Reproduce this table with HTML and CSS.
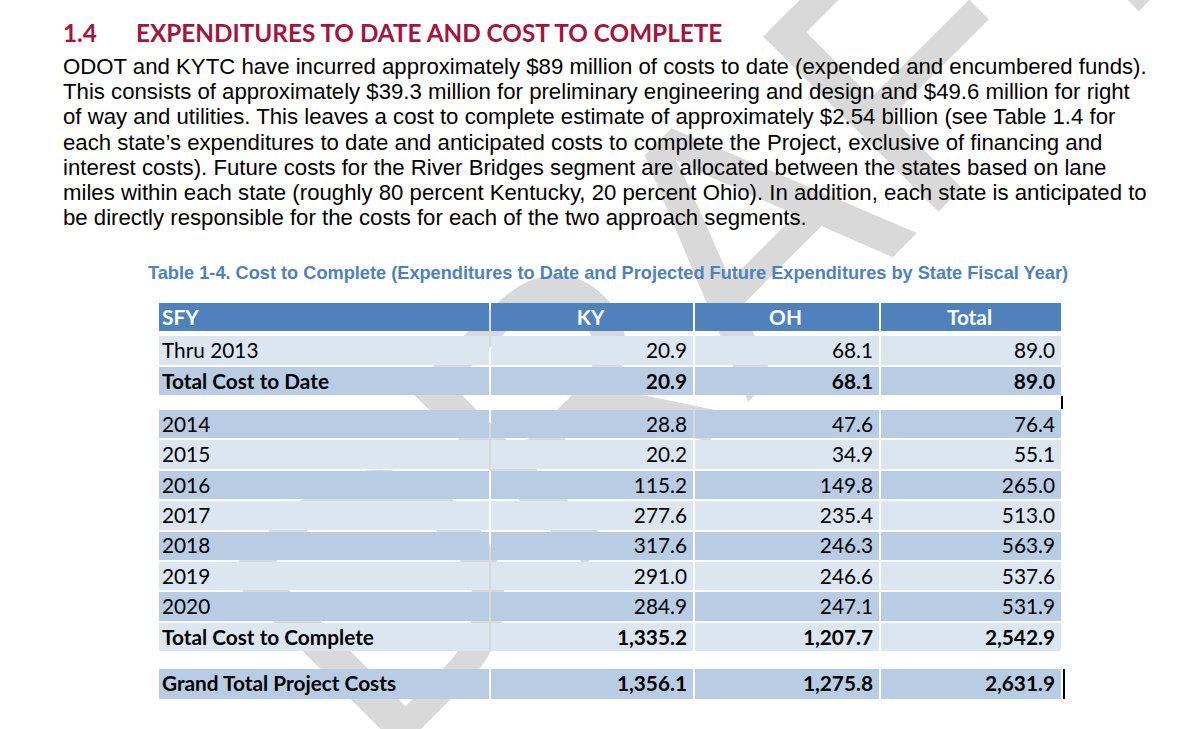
FILE: index.html
```html
<!DOCTYPE html>
<html>
<head>
<meta charset="utf-8">
<link rel="stylesheet" href="styles.css">
</head>
<body>
<svg class="watermark" width="1200" height="729" viewBox="0 0 1200 729" aria-hidden="true"><text x="380" y="770" transform="rotate(-45 380 770)" class="wm-text">DRAFT</text></svg>
<div class="page">
<h1 class="heading"><span class="num">1.4</span><span>EXPENDITURES TO DATE AND COST TO COMPLETE</span></h1>
<p class="body-text">ODOT and KYTC have incurred approximately $89 million of costs to date (expended and encumbered funds).<br>This consists of approximately $39.3 million for preliminary engineering and design and $49.6 million for right<br>of way and utilities. This leaves a cost to complete estimate of approximately $2.54 billion (see Table 1.4 for<br>each state’s expenditures to date and anticipated costs to complete the Project, exclusive of financing and<br>interest costs). Future costs for the River Bridges segment are allocated between the states based on lane<br>miles within each state (roughly 80 percent Kentucky, 20 percent Ohio). In addition, each state is anticipated to<br>be directly responsible for the costs for each of the two approach segments.</p>
<p class="caption">Table 1-4. Cost to Complete (Expenditures to Date and Projected Future Expenditures by State Fiscal Year)</p>
<div class="table">
  <div class="row head"><div class="c first">SFY</div><div class="c">KY</div><div class="c">OH</div><div class="c">Total</div></div>
  <div class="row light top"><div class="c first">Thru 2013</div><div class="c">20.9</div><div class="c">68.1</div><div class="c">89.0</div></div>
  <div class="row mid bold"><div class="c first">Total Cost to Date</div><div class="c">20.9</div><div class="c">68.1</div><div class="c">89.0</div></div>
  <div class="spacer s1"><span class="caret c1"></span></div>
  <div class="row mid"><div class="c first">2014</div><div class="c">28.8</div><div class="c">47.6</div><div class="c">76.4</div></div>
  <div class="row light"><div class="c first">2015</div><div class="c">20.2</div><div class="c">34.9</div><div class="c">55.1</div></div>
  <div class="row mid"><div class="c first">2016</div><div class="c">115.2</div><div class="c">149.8</div><div class="c">265.0</div></div>
  <div class="row light"><div class="c first">2017</div><div class="c">277.6</div><div class="c">235.4</div><div class="c">513.0</div></div>
  <div class="row mid"><div class="c first">2018</div><div class="c">317.6</div><div class="c">246.3</div><div class="c">563.9</div></div>
  <div class="row light"><div class="c first">2019</div><div class="c">291.0</div><div class="c">246.6</div><div class="c">537.6</div></div>
  <div class="row mid"><div class="c first">2020</div><div class="c">284.9</div><div class="c">247.1</div><div class="c">531.9</div></div>
  <div class="row light bold"><div class="c first">Total Cost to Complete</div><div class="c">1,335.2</div><div class="c">1,207.7</div><div class="c">2,542.9</div></div>
  <div class="spacer s2"></div>
  <div class="row mid bold grand"><div class="c first">Grand Total Project Costs</div><div class="c">1,356.1</div><div class="c">1,275.8</div><div class="c">2,631.9<span class="caret c2"></span></div></div>
</div>
</div>
</body>
</html>
```
FILE: styles.css
```css
html { background: #ffffff; }
body {
  margin: 0;
  font-family: "Liberation Sans", Arial, sans-serif;
  color: #000;
  position: relative;
  z-index: 0;
  height: 729px;
  overflow: hidden;
}
.watermark {
  position: absolute;
  left: 0;
  top: 0;
  z-index: -1;
}
.wm-text {
  font-family: "Liberation Sans", Arial, sans-serif;
  font-size: 360px;
  fill: #d9d9d9;
}
.page {
  position: relative;
  z-index: 2;
  padding: 18px 0 0 63px;
}
.heading {
  margin: 0;
  display: flex;
  font-family: Lato, "Liberation Sans", sans-serif;
  font-weight: bold;
  font-size: 24.3px;
  line-height: 30px;
  color: #a5143e;
}
.heading .num { width: 73px; }
.body-text {
  margin: 6px 0 0 0;
  font-size: 22.2px;
  line-height: 25.2px;
  white-space: nowrap;
}
.caption {
  margin: 33px 0 0 85px;
  font-size: 18.2px;
  line-height: 20px;
  font-weight: bold;
  color: #4f81bd;
  white-space: nowrap;
}
.table {
  margin: 20px 0 0 96px;
  display: flex;
  flex-direction: column;
  gap: 2px;
  width: 904px;
  font-family: Lato, "Liberation Sans", sans-serif;
  font-size: 20.8px;
}
.row {
  display: grid;
  grid-template-columns: 330px 202px 184px 180px;
  column-gap: 2px;
  height: 28.4px;
}
.row.head { height: 28px; margin-bottom: 3px; }
.c {
  display: flex;
  align-items: center;
  justify-content: flex-end;
  padding: 0 6px 0 3px;
  line-height: 1;
}
.c.first { justify-content: flex-start; }
.head .c { background-color: #4f81bd; color: #fff; font-weight: bold; justify-content: center; }
.head .c.first { justify-content: flex-start; }
.light .c { background-color: #dce6f1; }
.mid .c { background-color: #b8cce4; }
.bold .c { font-weight: bold; }
.spacer { position: relative; }
.spacer.s1 { height: 10.9px; }
.spacer.s2 { height: 13.4px; }
.grand { height: 30px; }
.grand .c:last-child { position: relative; }
.caret {
  position: absolute;
  background: #000;
  width: 2px;
}
.caret.c1 { left: 902px; top: -1px; height: 13px; }
.caret.c2 { right: -4px; top: 0; height: 30px; }
```
